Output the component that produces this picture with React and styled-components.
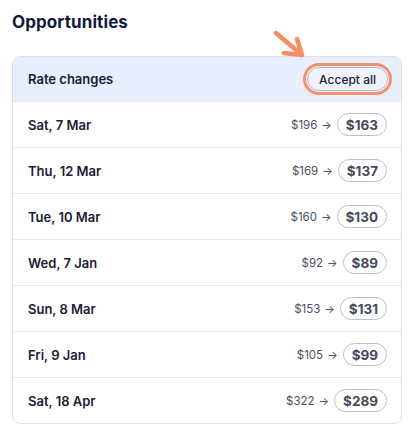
import React from "react";
import styled, { createGlobalStyle } from "styled-components";

const GlobalStyle = createGlobalStyle`
  * { box-sizing: border-box; }
  body {
    margin: 0;
    background: #ffffff;
    font-family: Inter, "Noto Sans", sans-serif;
    color: #161c36;
  }
`;

const Page = styled.div`
  position: relative;
  padding: 10px 12px 12px 12px;
  width: 420px;
`;

const Title = styled.h2`
  margin: 0 0 22px 0;
  font-size: 17px;
  line-height: 24px;
  font-weight: 700;
  color: #101a3d;
  letter-spacing: 0.1px;
`;

const Card = styled.div`
  width: 390px;
  border: 1px solid #dde1e9;
  border-radius: 8px;
  overflow: hidden;
  background: #fff;
`;

const Header = styled.div`
  display: flex;
  align-items: center;
  justify-content: space-between;
  height: 44px;
  padding: 0 13px 0 15px;
  background: #e8eefb;
`;

const HeaderTitle = styled.span`
  font-size: 13px;
  font-weight: 600;
  color: #161c36;
`;

const AcceptButton = styled.button`
  height: 24px;
  padding: 0 11px;
  border: 1px solid #b4bbca;
  border-radius: 12px;
  background: #eef2fb;
  font-family: inherit;
  font-size: 12px;
  font-weight: 500;
  color: #1d2235;
  outline: 3px solid #f6906a;
  outline-offset: 1px;
  cursor: pointer;
`;

const Row = styled.div`
  display: flex;
  align-items: center;
  justify-content: space-between;
  height: 46px;
  padding: 0 14px 0 15px;
  border-top: 1px solid #e5e8ee;
`;

const DateLabel = styled.span`
  font-size: 13px;
  font-weight: 600;
  color: #1b2034;
`;

const Prices = styled.div`
  display: flex;
  align-items: center;
  gap: 4px;
`;

const OldPrice = styled.span`
  font-size: 11.5px;
  color: #4c5060;
`;

const Arrow = styled.span`
  font-size: 11px;
  color: #4c5060;
  margin-right: 1px;
`;

const NewPrice = styled.span`
  display: inline-flex;
  align-items: center;
  justify-content: center;
  height: 23px;
  padding: 0 8px;
  min-width: 42px;
  border: 1px solid #b9bfcc;
  border-radius: 12px;
  font-size: 13.5px;
  font-weight: 700;
  color: #464b5c;
`;

const Pointer = styled.svg`
  position: absolute;
  left: 270px;
  top: 28px;
`;

const rows = [
  { date: "Sat, 7 Mar", from: "$196", to: "$163" },
  { date: "Thu, 12 Mar", from: "$169", to: "$137" },
  { date: "Tue, 10 Mar", from: "$160", to: "$130" },
  { date: "Wed, 7 Jan", from: "$92", to: "$89" },
  { date: "Sun, 8 Mar", from: "$153", to: "$131" },
  { date: "Fri, 9 Jan", from: "$105", to: "$99" },
  { date: "Sat, 18 Apr", from: "$322", to: "$289" },
];

export default function App() {
  return (
    <Page>
      <GlobalStyle />
      <Title>Opportunities</Title>
      <Card>
        <Header>
          <HeaderTitle>Rate changes</HeaderTitle>
          <AcceptButton>Accept all</AcceptButton>
        </Header>
        {rows.map((r) => (
          <Row key={r.date}>
            <DateLabel>{r.date}</DateLabel>
            <Prices>
              <OldPrice>{r.from}</OldPrice>
              <Arrow>→</Arrow>
              <NewPrice>{r.to}</NewPrice>
            </Prices>
          </Row>
        ))}
      </Card>
      {/* annotation arrow pointing at the button */}
      <Pointer width="40" height="36" viewBox="0 0 40 36">
        <g stroke="#f78d63" strokeWidth="4.5" strokeLinecap="round" strokeLinejoin="round" fill="none">
          <path d="M6 5 L32 27" />
          <path d="M27 11 L32 27 L14 25" />
        </g>
      </Pointer>
    </Page>
  );
}
